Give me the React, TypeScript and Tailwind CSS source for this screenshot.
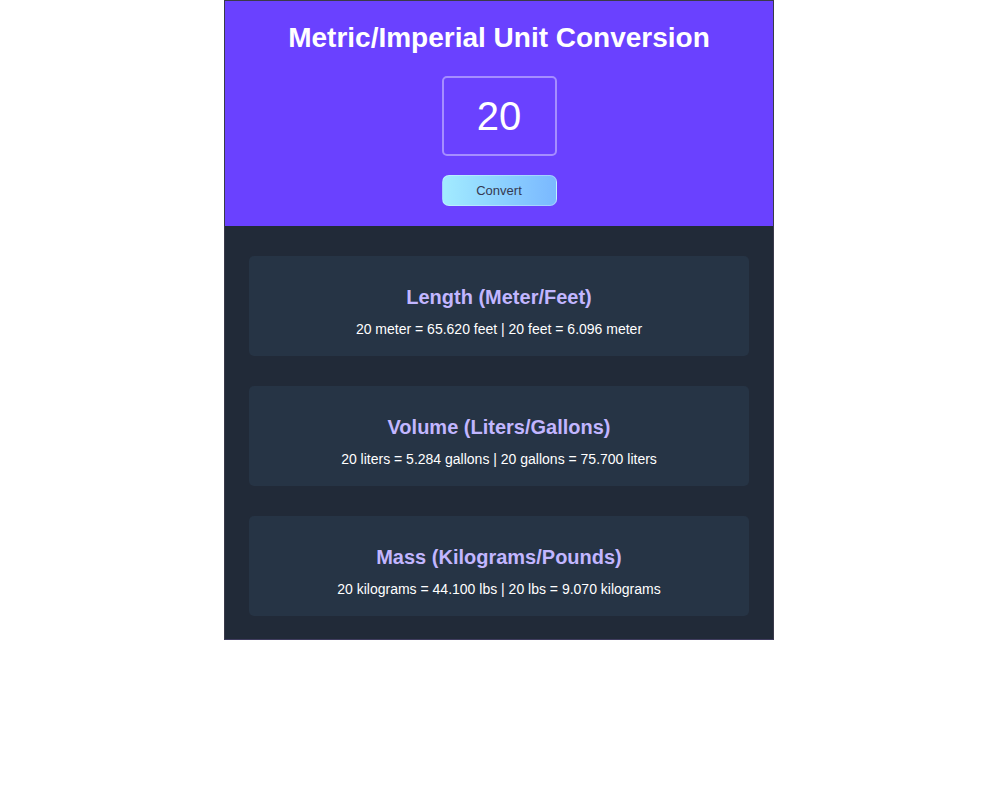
import React, { useState } from 'react';

type Row = { title: string; text: string };

const conversions = (n: number): Row[] => [
  {
    title: 'Length (Meter/Feet)',
    text: `${n} meter = ${(n * 3.281).toFixed(3)} feet | ${n} feet = ${(n / 3.281).toFixed(3)} meter`,
  },
  {
    title: 'Volume (Liters/Gallons)',
    text: `${n} liters = ${(n * 0.2642).toFixed(3)} gallons | ${n} gallons = ${(n * 3.785).toFixed(3)} liters`,
  },
  {
    title: 'Mass (Kilograms/Pounds)',
    text: `${n} kilograms = ${(n * 2.205).toFixed(3)} lbs | ${n} lbs = ${(n * 0.4535).toFixed(3)} kilograms`,
  },
];

export default function App() {
  const [value, setValue] = useState('20');
  const [num, setNum] = useState(20);

  const rows = conversions(num);

  return (
    <div className="min-h-screen bg-white pl-[3px] font-['Liberation_Sans',Arial,sans-serif]">
      <div className="mx-auto w-[550px] border border-[#3a3a4a] border-b-[#3f3c5e]">
        <header className="bg-[#6a41ff] flex flex-col items-center pt-[19px] pb-[20px]">
          <h1 className="text-[28px] leading-[36px] font-bold text-white">
            Metric/Imperial Unit Conversion
          </h1>
          <input
            value={value}
            onChange={(e) => setValue(e.target.value)}
            className="mt-[20px] w-[115px] h-[80px] bg-transparent border-2 border-white/40 rounded-[5px] text-center text-white text-[40px] outline-none"
          />
          <button
            type="button"
            onClick={() => setNum(Number(value) || 0)}
            className="mt-[19px] w-[115px] h-[31px] rounded-[7px] bg-gradient-to-r from-[#a2ebff] to-[#7ab8ff] border border-white/30 text-[#353a52] text-[13px]"
          >
            Convert
          </button>
        </header>

        <main className="bg-[#212a38] px-[24px] pt-[30px] pb-[23px] flex flex-col gap-[30px]">
          {rows.map((r) => (
            <section
              key={r.title}
              className="bg-[#263445] rounded-[5px] h-[100px] flex flex-col items-center pt-[30px]"
            >
              <h3 className="text-[20px] leading-[23px] font-bold text-[#c2b6ff]">{r.title}</h3>
              <p className="mt-[12px] text-[14px] leading-[16px] text-white">{r.text}</p>
            </section>
          ))}
        </main>
      </div>
    </div>
  );
}
